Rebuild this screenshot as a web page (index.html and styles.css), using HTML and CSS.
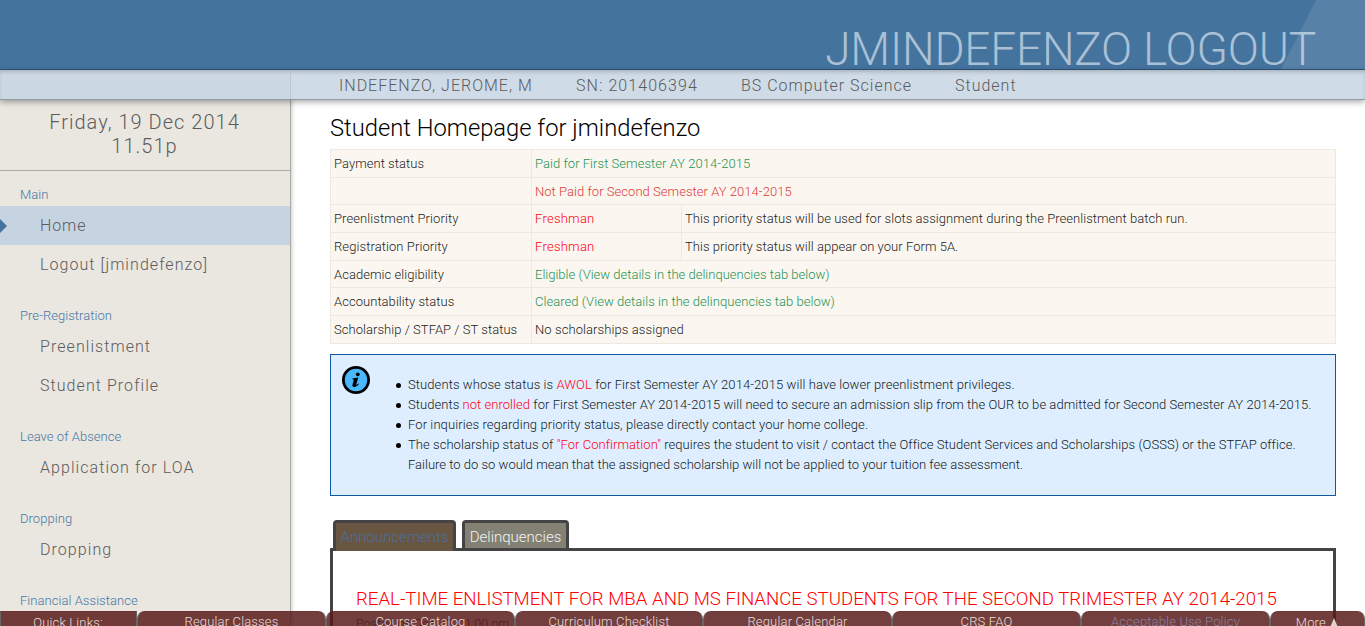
FILE: index.html
```html
<!DOCTYPE html>
<html lang="en">
<head>
<meta charset="utf-8">
<title>Student Homepage</title>
<link rel="stylesheet" href="styles.css">
</head>
<body>
<div class="page">
  <header class="banner"><div class="account">JMINDEFENZO LOGOUT</div></header>
  <div class="userbar">
    <div class="userbar-side"></div>
    <div class="userbar-info">
      <span class="u-name">INDEFENZO, JEROME, M</span><span class="u-sn">SN: 201406394</span><span class="u-course">BS Computer Science</span><span class="u-role">Student</span>
    </div>
  </div>
  <div class="columns">
    <aside class="sidebar">
      <div class="clock"><div class="date">Friday, 19 Dec 2014</div><div class="time">11.51p</div></div>
      <nav class="menu">
        <h3>Main</h3>
        <a class="active">Home</a>
        <a>Logout [jmindefenzo]</a>
        <h3>Pre-Registration</h3>
        <a>Preenlistment</a>
        <a>Student Profile</a>
        <h3>Leave of Absence</h3>
        <a>Application for LOA</a>
        <h3>Dropping</h3>
        <a>Dropping</a>
        <h3>Financial Assistance</h3>
      </nav>
    </aside>
    <main class="content">
      <h1>Student Homepage for jmindefenzo</h1>
      <div class="status">
        <div class="row"><div>Payment status</div><div class="ok">Paid for First Semester AY 2014-2015</div></div>
        <div class="row"><div></div><div class="bad">Not Paid for Second Semester AY 2014-2015</div></div>
        <div class="row three"><div class="wide">Preenlistment Priority</div><div class="red">Freshman</div><div>This priority status will be used for slots assignment during the Preenlistment batch run.</div></div>
        <div class="row three"><div class="wide">Registration Priority</div><div class="red">Freshman</div><div>This priority status will appear on your Form 5A.</div></div>
        <div class="row"><div>Academic eligibility</div><div class="ok tight">Eligible (View details in the delinquencies tab below)</div></div>
        <div class="row"><div>Accountability status</div><div class="ok">Cleared (View details in the delinquencies tab below)</div></div>
        <div class="row"><div>Scholarship / STFAP / ST status</div><div class="wide">No scholarships assigned</div></div>
      </div>
      <section class="notice">
        <svg class="info" width="30" height="30" viewBox="0 0 30 30">
          <circle cx="15" cy="15" r="12.6" fill="#4ab8ff" stroke="#000" stroke-width="2.8"/>
          <circle cx="16.8" cy="9.3" r="1.9"/>
          <path d="M11.4 13.4 L17.3 12.5 L15.1 19.7 Q15 20.6 17.5 18.5 L18.1 19.1 Q15.8 22.2 13.2 22.2 Q10.9 22 11.5 19.6 L12.9 14.7 L11.3 14.3 Z"/>
        </svg>
        <ul>
          <li>Students whose status is <em>AWOL</em> for First Semester AY 2014-2015 will have lower preenlistment privileges.</li>
          <li>Students <em>not enrolled</em> for First Semester AY 2014-2015 will need to secure an admission slip from the OUR to be admitted for Second Semester AY 2014-2015.</li>
          <li>For inquiries regarding priority status, please directly contact your home college.</li>
          <li>The scholarship status of <em>"For Confirmation"</em> requires the student to visit / contact the Office Student Services and Scholarships (OSSS) or the STFAP office.<br><span class="tight">Failure to do so would mean that the assigned scholarship will not be applied to your tuition fee assessment.</span></li>
        </ul>
      </section>
      <div class="tabs"><div class="tab on">Announcements</div><div class="tab">Delinquencies</div></div>
      <section class="panel">
        <h2>REAL-TIME ENLISTMENT FOR MBA AND MS FINANCE STUDENTS FOR THE SECOND TRIMESTER AY 2014-2015</h2>
        <p>Posted on Dec 12, 01:00 pm</p>
      </section>
    </main>
  </div>
  <footer class="quick">
    <div class="label">Quick Links:</div><div>Regular Classes</div><div>Course Catalog</div><div>Curriculum Checklist</div><div>Regular Calendar</div><div>CRS FAQ</div><div class="visited">Acceptable Use Policy</div><div class="more">More <svg width="10" height="12" viewBox="0 0 10 12"><path d="M5 0 L10 12 H0 Z" fill="#ddd5d0"/></svg></div>
  </footer>
</div>
</body>
</html>
```
FILE: styles.css
```css
* { box-sizing: border-box; }
body { margin: 0; font-family: Roboto, "Liberation Sans", sans-serif; font-weight: 300; font-size: 13px; color: #1c1c1c; background: #fff; }
.page { position: relative; width: 1365px; height: 626px; overflow: hidden; }
.banner { position: relative; height: 70px; background: #44739e; border-bottom: 1px solid #2f567a; display: flex; justify-content: flex-end; }
.banner::after { content: ""; position: absolute; right: 0; top: 0; width: 138px; height: 69px; background: rgba(255,255,255,.1); clip-path: polygon(89px 0, 138px 0, 138px 69px, 54px 69px); }
.account { font-size: 46px; line-height: 54px; letter-spacing: -.22px; padding: 22px 49px 0 0; color: #a9c0d5; font-weight: 300; white-space: nowrap; }
.userbar { position: relative; z-index: 2; height: 30px; display: flex; background: #cfdbe7; border-bottom: 1px solid #919ba6; box-shadow: 0 2px 6px rgba(0,0,0,.35), inset 0 3px 5px -2px rgba(0,0,0,.25); }
.userbar-side { width: 291px; border-right: 1px solid #bdc8d3; background: rgba(190,195,195,.12); }
.userbar-info { display: flex; padding-left: 48px; font-size: 16px; line-height: 32px; letter-spacing: 1px; color: #5c5c5c; white-space: nowrap; }
.u-name { width: 237px; } .u-sn { width: 165px; letter-spacing: 1.07px; } .u-course { width: 214px; }
.columns { display: flex; height: 526px; }
.sidebar { width: 291px; flex: none; background: #eae6e0; border-right: 1px solid #aaa9a5; box-shadow: 1px 0 4px rgba(0,0,0,.2); }
.clock { height: 71px; padding: 10px 1px 0 0; border-bottom: 1px solid #aaa9a5; text-align: center; font-size: 20px; line-height: 24px; letter-spacing: 1.03px; color: #5c5c5c; white-space: nowrap; }
.menu { padding-top: 1px; margin-top: -9px; }
.menu h3 { margin: 0; height: 43px; padding: 22px 0 0 20px; font-size: 13px; line-height: 20px; letter-spacing: .05px; font-weight: 300; color: #4778a5; }
.menu a { position: relative; display: block; height: 39px; padding-left: 40px; line-height: 40px; font-size: 16px; letter-spacing: 1.06px; color: #5c5c5c; white-space: nowrap; }
.menu .active { background: #c6d3e1; letter-spacing: .9px; }
.menu .active::before { content: ""; position: absolute; left: 0; top: 13px; border: 7px solid transparent; border-left-color: #44739e; border-right: 0; }
.content { width: 1045px; padding: 13px 0 0 39px; }
h1 { margin: 0; font-size: 23.75px; line-height: 31px; height: 36px; font-weight: 300; color: #000; white-space: nowrap; }
.status { width: 1006px; height: 195px; background: #fbf7f0; border: 1px solid #ece9e3; border-bottom: 0; display: grid; grid-template-rows: 28px 27px 28px 28px 27px 28px 28px; letter-spacing: .045px; }
.row { display: grid; grid-template-columns: 201px 1fr; border-bottom: 1px solid #ece9e3; line-height: 27px; white-space: nowrap; }
.three { grid-template-columns: 201px 150px 1fr; }
.row > div { padding-left: 3px; border-right: 1px solid #ece9e3; }
.row > div:last-child { border-right: 0; }
.wide { letter-spacing: .09px; }
.tight { letter-spacing: 0; }
.ok { color: #1d9253; } .bad { color: #dc3a3a; } .red, em { color: #ff0010; font-style: normal; }
.red { letter-spacing: .25px; }
.notice { position: relative; width: 1006px; height: 142px; margin-top: 10px; padding-top: 20px; background: #dfeeff; border: 1px solid #1059a2; }
.info { position: absolute; left: 10px; top: 10px; }
.notice ul { margin: 0; padding-left: 77px; line-height: 20px; color: #111a22; white-space: nowrap; list-style: none; letter-spacing: .05px; }
.notice li { position: relative; }
.notice li::before { content: ""; position: absolute; left: -12px; top: 8px; width: 5px; height: 5px; border-radius: 50%; background: #000; }
.notice li:nth-child(odd) { letter-spacing: .09px; }
.notice li:last-child { letter-spacing: .05px; }
.notice li .tight { letter-spacing: .01px; }
.tabs { display: flex; gap: 6px; height: 28px; margin-top: 24px; padding-left: 3px; position: relative; z-index: 1; }
.tab { width: 107px; height: 28px; border: 3px solid #444; border-bottom: 0; border-radius: 4px 4px 0 0; background: #838173; color: #f3f3f3; font-size: 15px; line-height: 28px; text-align: center; white-space: nowrap; }
.tab.on { width: 123px; height: 31px; background: #685642; color: #4b6f9c; }
.panel { width: 1006px; height: 120px; border: 3px solid #444; padding: 36px 0 0 23px; white-space: nowrap; }
h2 { margin: 0; font-size: 18.67px; line-height: 24px; font-weight: 300; color: #f00; }
.panel p { margin: 4px 0; line-height: 18px; font-size: 12.5px; }
.quick { position: absolute; z-index: 3; left: 0; top: 611px; height: 15px; width: 1365px; display: grid; grid-template-columns: 137px 189px 189px 188px 189px 189px 189px 95px; overflow: hidden; color: #eadfd9; font-size: 13px; letter-spacing: .16px; line-height: 20px; text-align: center; white-space: nowrap; }
.quick div { height: 30px; background: rgba(88,25,25,.84); border-radius: 8px 8px 0 0; border-left: 1px solid #666; border-right: 1px solid #666; border-top: 1px solid rgba(88,25,25,.2); }
.quick .label { border-radius: 0; line-height: 22px; padding-right: 1px; }
.quick .visited { color: #8882a2; }
.quick .more { line-height: 22px; }
.more svg { vertical-align: -3px; }
```
